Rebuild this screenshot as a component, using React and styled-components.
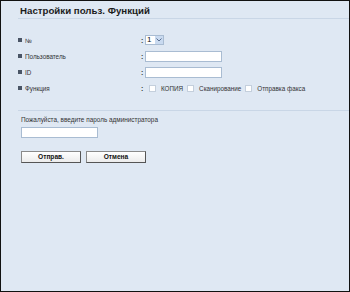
import React from "react";
import styled, { createGlobalStyle } from "styled-components";

const Global = createGlobalStyle`
  html, body { margin: 0; padding: 0; background: #dfe8f3; }
  body { font-family: "Liberation Sans", Arial, sans-serif; }
  * { box-sizing: border-box; }
`;

const Frame = styled.div`
  width: 350px;
  height: 292px;
  border: 1px solid #111;
  background: #dfe8f3;
  color: #222;
  font-family: "Liberation Sans", Arial, sans-serif;
`;

const Header = styled.div`
  margin-left: 17px;
  height: 18px;
  border-bottom: 1px solid #c9d6e6;
  display: flex;
  align-items: center;
  padding-left: 2px;
  padding-top: 2px;
`;

const Title = styled.h1`
  margin: 0;
  font-size: 9.7px;
  font-weight: bold;
  color: #1c1c1c;
`;

const Rows = styled.div`
  margin-top: 13px;
  margin-left: 16px;
  display: flex;
  flex-direction: column;
`;

const Row = styled.div`
  display: grid;
  grid-template-columns: 124px 4px auto;
  align-items: center;
  height: 16px;
  font-size: 6.3px;
  color: #333;
`;

const Label = styled.div`
  display: flex;
  align-items: center;
  gap: 3px;
  padding-left: 1px;
`;

const Bullet = styled.span`
  width: 4px;
  height: 4px;
  background: #4a5566;
  display: inline-block;
`;

const Colon = styled.span`
  font-weight: bold;
  font-size: 7px;
  color: #333;
`;

const Controls = styled.div`
  display: flex;
  align-items: center;
`;

const Select = styled.div`
  width: 19px;
  height: 10px;
  border: 1px solid #a9bcd2;
  background: #fff;
  display: flex;
  align-items: stretch;
  font-size: 8px;
`;

const SelectValue = styled.span`
  flex: 1;
  display: flex;
  align-items: center;
  padding-left: 1px;
  line-height: 1;
  color: #111;
`;

const SelectArrow = styled.span`
  width: 8px;
  background: #c9daf0;
  display: flex;
  align-items: center;
  justify-content: center;
`;

const TextInput = styled.div`
  width: 77px;
  height: 11px;
  background: #fff;
  border: 1px solid #a9bcd2;
`;

const Check = styled.span`
  width: 7px;
  height: 7px;
  background: #fff;
  border: 1px solid #c4cfdc;
  margin-left: 4px;
  display: inline-block;
`;

const CheckText = styled.span`
  margin-left: 5px;
  font-size: 6.3px;
  color: #333;
`;

const Section = styled.div`
  margin-left: 17px;
  margin-top: 14px;
  border-top: 1px solid #c9d6e6;
  padding-left: 3px;
  padding-top: 4px;
`;

const Prompt = styled.div`
  font-size: 6.4px;
  color: #333;
  height: 10px;
  line-height: 10px;
`;

const PasswordBox = styled.div`
  margin-top: 2px;
  width: 77px;
  height: 11px;
  background: #fff;
  border: 1px solid #a9bcd2;
`;

const Buttons = styled.div`
  display: flex;
  gap: 5px;
  margin-top: 13px;
`;

const Button = styled.button`
  width: 60px;
  height: 12px;
  padding: 0;
  font-family: "Liberation Sans", Arial, sans-serif;
  font-size: 6.6px;
  font-weight: bold;
  color: #111;
  background: linear-gradient(#ffffff, #ececec);
  border: 1px solid #8a8a8a;
  border-bottom-color: #555;
  border-right-color: #555;
  line-height: 1;
`;

const Arrow = () => (
  <svg width="6" height="4" viewBox="0 0 6 4">
    <path d="M0.5 0.5 L3 3 L5.5 0.5" fill="none" stroke="#5a6f8f" strokeWidth="1" />
  </svg>
);

export default function App() {
  return (
    <>
      <Global />
      <Frame>
        <Header>
          <Title>Настройки польз. Функций</Title>
        </Header>
        <Rows>
          <Row>
            <Label><Bullet />№</Label>
            <Colon>:</Colon>
            <Controls>
              <Select>
                <SelectValue>1</SelectValue>
                <SelectArrow><Arrow /></SelectArrow>
              </Select>
            </Controls>
          </Row>
          <Row>
            <Label><Bullet />Пользователь</Label>
            <Colon>:</Colon>
            <Controls><TextInput /></Controls>
          </Row>
          <Row>
            <Label><Bullet />ID</Label>
            <Colon>:</Colon>
            <Controls><TextInput /></Controls>
          </Row>
          <Row>
            <Label><Bullet />Функция</Label>
            <Colon>:</Colon>
            <Controls>
              <Check />
              <CheckText>КОПИЯ</CheckText>
              <Check />
              <CheckText>Сканирование</CheckText>
              <Check />
              <CheckText>Отправка факса</CheckText>
            </Controls>
          </Row>
        </Rows>
        <Section>
          <Prompt>Пожалуйста, введите пароль администратора</Prompt>
          <PasswordBox />
          <Buttons>
            <Button>Отправ.</Button>
            <Button>Отмена</Button>
          </Buttons>
        </Section>
      </Frame>
    </>
  );
}
